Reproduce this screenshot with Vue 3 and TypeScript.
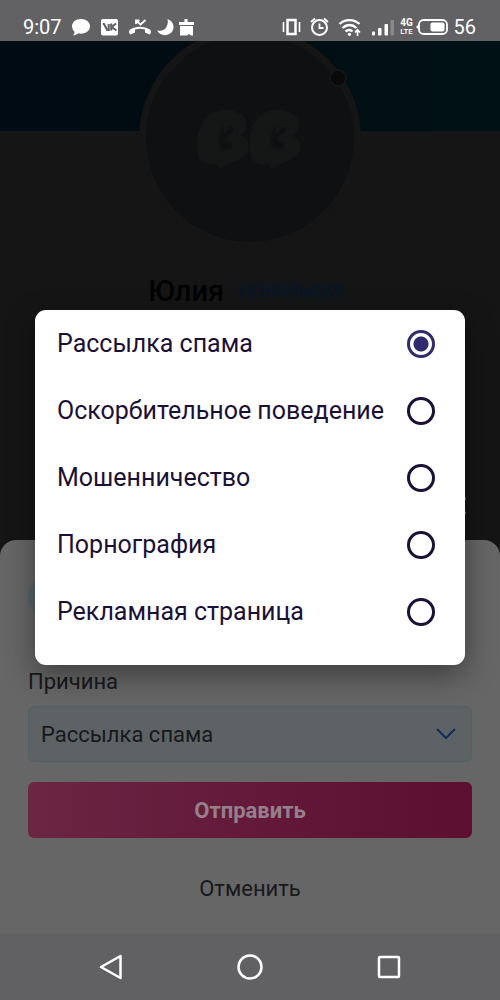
<script setup lang="ts">
import { ref } from 'vue'

const reasons: string[] = [
  'Рассылка спама',
  'Оскорбительное поведение',
  'Мошенничество',
  'Порнография',
  'Рекламная страница',
]
const selected = ref<string>(reasons[0])
</script>

<template>
  <div class="screen">
    <header class="status">
      <time class="clock">9:07</time>
      <svg class="notices" width="126" height="22" viewBox="0 0 126 22" fill="#fff" aria-hidden="true">
        <path d="M10 3c5.200 0 9 3.200 9 7.300s-3.800 7.400-9 7.400c-1 0-2-.1-2.900-.4C5.500 18.700 3.800 19.300 2 19.300c1-.9 1.500-2 1.500-3.500C2 14.500 1 12.500 1 10.300 1 6.200 4.800 3 10 3z" />
        <rect x="30" y="3" width="17" height="16.500" rx="2" />
        <path d="M31.800 8h1.200l3.200 6h1.500V8M40.200 7.500v7M45 7.500l-4.300 3.500L45.500 14.500" fill="none" stroke="#626164" stroke-width="2.100" />
        <path d="M58.500 17.500c-1-2-.4-3.500 1-4.300 5.700-3.400 13.300-3.400 19 0 1.400.8 2 2.300 1 4.300l-.8 1-4.700-2v-3c-3.300-1-6.700-1-10 0v3l-4.700 2z" />
        <path d="M65.500 5l4 3.500L74.500 4M65 8V4.500h3.500" fill="none" stroke="#fff" stroke-width="1.800" />
        <path d="M96.500 3c5.500 2 7.500 7.500 5 12-2.900 5.200-12 6-15.500-.5 4.500 1 7.800-.3 9.400-3.500 1.500-2.700 1.800-5.500 1.100-8z" />
        <path d="M108 6h5.500V3h3v3h6.500v3h-15zM109 10h13v9.500h-2l-2-1.500-2 1.500h-7z" />
      </svg>
      <span class="grow"></span>
      <svg class="signals" width="114" height="22" viewBox="0 0 114 22" fill="none" stroke="#fff" aria-hidden="true">
        <path d="M1.500 6v10M17.500 6v10" stroke-width="1.600" />
        <rect x="5.500" y="4" width="8" height="14" stroke-width="2.500" />
        <circle cx="37.500" cy="11.500" r="7.500" stroke-width="2" />
        <path d="M37.500 7.500v4.500h4M29 6l4-3.500M46 6l-4-3.500" stroke-width="1.800" />
        <path d="M57.500 8c5.500-5.300 14.500-5.300 20 0M60.500 12c4.200-4 9.800-4 14 0M63.500 15.500c2.500-2 5-2 7 0" stroke-width="2.300" />
        <path d="M75.500 20v-6M73 16.500l2.500-2.700 2.500 2.700" stroke-width="1.700" />
        <circle cx="67.500" cy="18.300" r="1.600" fill="#fff" stroke="none" />
        <g fill="#fff" stroke="none">
          <rect x="90" y="15.500" width="3" height="4" rx="1" />
          <rect x="96" y="12" width="3.500" height="7.500" rx="1" />
          <rect x="102.500" y="8" width="3.500" height="11.500" rx="1" />
          <rect x="108.500" y="4" width="3.500" height="15.500" rx="1" opacity="0.250" />
        </g>
      </svg>
      <span class="network"><span class="generation">4G</span><span>LTE</span></span>
      <svg class="battery" width="32" height="16" viewBox="0 0 32 16" aria-hidden="true">
        <rect x="3" y="1" width="28" height="14" rx="4.500" fill="none" stroke="#fff" stroke-width="1.800" />
        <path d="M3 5L0 8l3 3z" fill="#fff" />
        <rect x="14.500" y="3.500" width="14" height="9" rx="2" fill="#fff" />
      </svg>
      <span class="level">56</span>
    </header>

    <main class="body">
      <section class="profile">
        <div class="cover">
          <div class="avatar">
            <svg width="108" height="60" viewBox="0 0 108 60" aria-hidden="true">
              <g fill="#151717" stroke="#151717" stroke-width="2" stroke-linejoin="round">
                <path fill-rule="evenodd" d="M4 50C-1 30 4 5 27 3c13-1 26 6 22 17-1 4-4 6-7 8 7 2 11 7 9 14-3 9-17 11-27 17l-3-4c-6 1-12 0-17-5zM29 15c-7 6-9 15-6 25 4 4 11 3 14-1 2-4-2-6-6-7l1-4c5-1 7-4 6-8-2-3-5-3-7 1l-2 3z" />
                <path fill-rule="evenodd" d="M56 50C51 30 56 5 79 3c13-1 26 6 22 17-1 4-4 6-7 8 7 2 11 7 9 14-3 9-17 11-27 17l-3-4c-6 1-12 0-17-5zM81 15c-7 6-9 15-6 25 4 4 11 3 14-1 2-4-2-6-6-7l1-4c5-1 7-4 6-8-2-3-5-3-7 1l-2 3z" />
              </g>
            </svg>
            <span class="presence"></span>
          </div>
        </div>
        <div class="identity">
          <h1>Юлия</h1>
          <span class="tag">НОВЕНЬКАЯ</span>
        </div>
        <div class="extras">
          <svg width="18" height="17" viewBox="0 0 18 17" aria-hidden="true">
            <path d="M1 1.500h16M1 15.500h16" stroke="#777" stroke-width="2" />
          </svg>
        </div>
      </section>

      <form class="sheet" @submit.prevent>
        <span class="thumb"></span>
        <label for="reason">Причина</label>
        <div class="field">
          <select id="reason" v-model="selected">
            <option v-for="r in reasons" :key="r">{{ r }}</option>
          </select>
          <svg class="chevron" width="20" height="12" viewBox="0 0 20 12" aria-hidden="true">
            <path d="M1 1l9 9 9-9" fill="none" stroke="#112f5c" stroke-width="2" />
          </svg>
        </div>
        <button class="send" type="submit">Отправить</button>
        <button class="cancel" type="button">Отменить</button>
      </form>

      <div class="overlay">
        <div class="dialog" role="dialog" aria-label="Причина">
          <label v-for="r in reasons" :key="r" class="option">
            <span>{{ r }}</span>
            <input v-model="selected" type="radio" name="choice" :value="r" />
          </label>
        </div>
      </div>
    </main>

    <nav class="navbar">
      <button type="button" aria-label="Назад">
        <svg width="26" height="28" viewBox="0 0 26 28"><path d="M22.500 3v22L3 14z" /></svg>
      </button>
      <button type="button" aria-label="Домой">
        <svg width="28" height="28" viewBox="0 0 28 28"><circle cx="14" cy="14" r="11.500" /></svg>
      </button>
      <button type="button" aria-label="Недавние">
        <svg width="26" height="28" viewBox="0 0 26 28"><rect x="3" y="4" width="20" height="20" rx="1" /></svg>
      </button>
    </nav>
  </div>
</template>

<style>
body {
  margin: 0;
  background: #151515;
}
</style>

<style scoped>
.screen {
  display: flex;
  flex-direction: column;
  min-height: 100vh;
  font-family: Roboto, "Noto Sans", sans-serif;
  background: #151515;
}
.screen * {
  box-sizing: border-box;
}
button,
select {
  font: inherit;
  border: 0;
  padding: 0;
  margin: 0;
  background: none;
}
.status {
  display: flex;
  align-items: center;
  height: 41px;
  padding: 12px 24px 0 23px;
  background: #626164;
  color: #fff;
}
.clock,
.level {
  font-size: 20px;
  line-height: 28px;
}
.notices {
  margin-left: 9px;
}
.grow {
  flex: 1;
}
.network {
  display: flex;
  flex-direction: column;
  align-items: center;
  width: 14px;
  margin: 0 2px 0 4px;
  font-size: 8px;
  line-height: 9px;
  font-weight: 500;
}
.generation {
  font-size: 10px;
  font-weight: 700;
}
.level {
  margin-left: 6px;
}
.body {
  position: relative;
  flex: 1;
  display: flex;
  flex-direction: column;
}
.profile {
  flex: 1;
}
.cover {
  display: flex;
  justify-content: center;
  height: 90px;
  background: linear-gradient(90deg, #000b14, #000b12 30%, #001014 75%, #001115);
}
.avatar {
  position: relative;
  display: grid;
  place-items: center;
  flex: none;
  width: 222px;
  height: 208px;
  overflow: hidden;
}
.avatar::before {
  content: "";
  box-sizing: border-box;
  position: absolute;
  bottom: 0;
  left: 0;
  width: 222px;
  height: 222px;
  border: 7px solid #151515;
  border-radius: 50%;
  background: #0e1012;
}
.avatar svg {
  position: relative;
  margin-bottom: 14px;
}
.presence {
  position: absolute;
  top: 28px;
  right: 14px;
  width: 18px;
  height: 18px;
  border: 2px solid #151515;
  border-radius: 50%;
  background: #09090b;
}
.identity {
  display: flex;
  justify-content: center;
  align-items: center;
  gap: 10px;
  margin-top: 142px;
  padding-right: 4px;
}
h1 {
  margin: 0;
  font-size: 29px;
  line-height: 36px;
  font-weight: 500;
  color: #030304;
}
.tag {
  padding: 0 4px;
  border-radius: 4px;
  background: #131517;
  font-size: 18px;
  line-height: 26px;
  color: #08182c;
}
.extras {
  display: flex;
  justify-content: flex-end;
  margin-top: 188px;
  padding-right: 33px;
}
.sheet {
  display: flex;
  flex-direction: column;
  padding: 34px 28px 24px;
  border-radius: 16px 16px 0 0;
  background: #666;
  color: #17191c;
}
.thumb {
  width: 46px;
  height: 46px;
  border-radius: 50%;
  background: #56646a;
}
.sheet label {
  margin: 48px 0 10px;
  font-size: 22px;
  line-height: 28px;
}
.field {
  display: grid;
  align-items: center;
}
.field > * {
  grid-area: 1 / 1;
}
select {
  appearance: none;
  width: 100%;
  height: 56px;
  padding: 0 44px 0 12px;
  border: 1px solid #526067;
  border-radius: 6px;
  background: #5d6264;
  font-size: 22px;
  color: #17191c;
}
.chevron {
  justify-self: end;
  margin-right: 16px;
  pointer-events: none;
}
.send {
  height: 56px;
  margin-top: 20px;
  border-radius: 6px;
  background: linear-gradient(90deg, #6a2642, #64193a 50%, #5c0f30);
  font-size: 22px;
  font-weight: 700;
  color: #95808a;
}
.cancel {
  align-self: center;
  margin-top: 30px;
  font-size: 22px;
  line-height: 42px;
  color: #17191c;
}
.overlay {
  position: absolute;
  inset: 0;
  display: flex;
  align-items: center;
  padding: 0 35px;
}
.dialog {
  flex: 1;
  padding-bottom: 20px;
  border-radius: 11px;
  background: #fff;
  box-shadow: 0 10px 30px rgba(0, 0, 0, 0.4);
}
.option {
  display: flex;
  align-items: center;
  justify-content: space-between;
  height: 67px;
  padding: 0 30px 0 22px;
  font-size: 25px;
  line-height: 32px;
  color: #1b1036;
}
.option input {
  appearance: none;
  width: 28px;
  height: 28px;
  margin: 0;
  border: 3px solid #1b1036;
  border-radius: 50%;
}
.option input:checked {
  border-color: #312a6c;
  background: radial-gradient(circle, #312a6c 7px, transparent 8px);
}
.navbar {
  display: flex;
  justify-content: center;
  align-items: center;
  gap: 112px;
  height: 66px;
  background: #616063;
}
.navbar button {
  display: flex;
}
.navbar svg {
  fill: none;
  stroke: #fff;
  stroke-width: 2.5;
  stroke-linejoin: round;
}
</style>
